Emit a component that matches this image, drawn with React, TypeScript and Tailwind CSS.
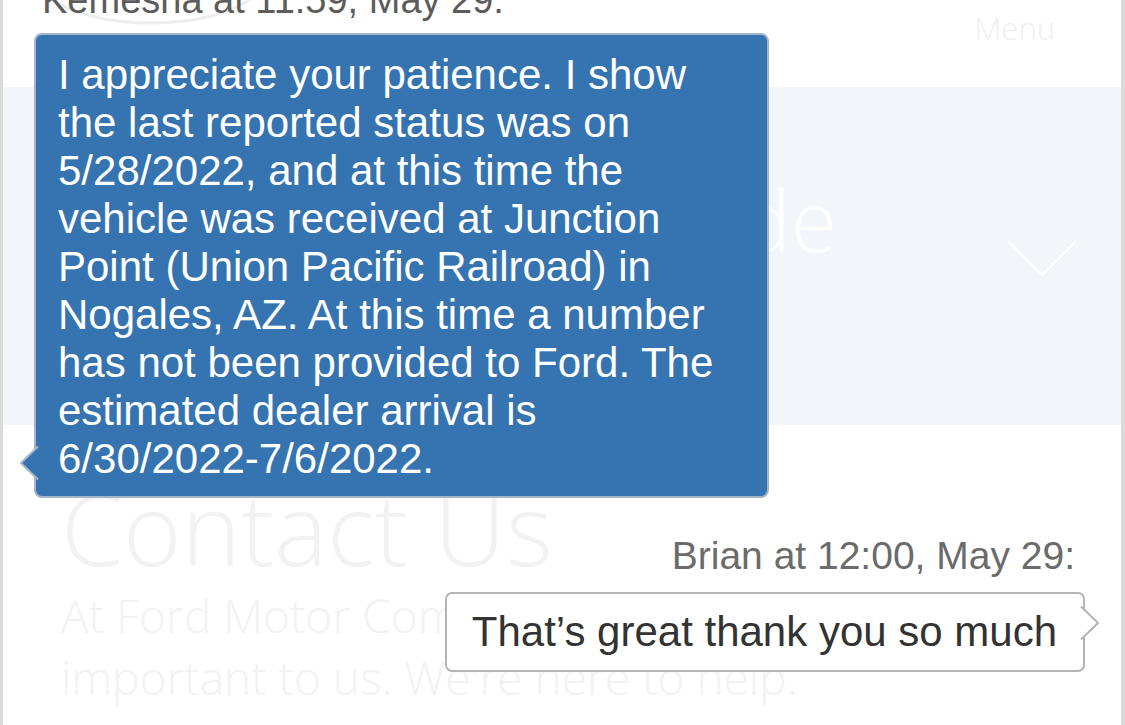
import React from "react";

const agentLines = [
  "I appreciate your patience. I show",
  "the last reported status was on",
  "5/28/2022, and at this time the",
  "vehicle was received at Junction",
  "Point (Union Pacific Railroad) in",
  "Nogales, AZ. At this time a number",
  "has not been provided to Ford. The",
  "estimated dealer arrival is",
  "6/30/2022-7/6/2022.",
];

function FadedPage() {
  return (
    <div className="flex h-full w-full">
      <div className="w-[3px] shrink-0 bg-[#dadada]" />
      <div className="flex min-w-0 flex-1 flex-col bg-white font-['Open_Sans',sans-serif]">
        {/* header */}
        <div className="relative flex h-[87px] items-start justify-end pr-[66px] pt-[5px]">
          <svg className="absolute left-[28px] top-[-70px]" width="240" height="98" viewBox="0 0 240 98">
            <ellipse cx="120" cy="45" rx="115" ry="48" fill="none" stroke="#ededed" strokeWidth="3" />
          </svg>
          <span className="text-[31px] font-light text-[#efefef]">Menu</span>
        </div>

        {/* hero band */}
        <div className="flex h-[338px] items-start justify-between bg-[#f2f6fa] pl-[47px] pr-[44px]">
          <div className="pt-[84px] text-[84px] font-light leading-[98px] text-white">
            <div>Emergency Roadside</div>
            <div>Assistance</div>
          </div>
          <svg className="mt-[153px]" width="70" height="38" viewBox="0 0 70 38">
            <path d="M2 2 L35 35 L68 2" fill="none" stroke="#ffffff" strokeWidth="2.5" />
          </svg>
        </div>

        {/* contact */}
        <div className="pl-[58px] pt-[52px] text-[#f2f2f2]">
          <div className="text-[100px] font-light leading-none">Contact Us</div>
          <p className="mt-[7px] text-[46px] font-light leading-[62px]">
            At Ford Motor Company, your satisfaction is
            <br />
            important to us. We're here to help.
          </p>
        </div>
      </div>
      <div className="w-[4px] shrink-0 bg-[#dadada]" />
    </div>
  );
}

function Chat() {
  return (
    <div className="absolute inset-0 flex flex-col font-['Liberation_Sans',Arial,sans-serif]">
      <div className="ml-[42px] mt-[-19px] whitespace-nowrap text-[38px] leading-none text-[#5c5c5c]">
        Kemesha at 11:59, May 29:
      </div>

      {/* agent bubble */}
      <div className="relative ml-[34px] mt-[14px] w-[735px] rounded-[8px] border-2 border-[#a3b5c6] bg-[#3574b0] px-[22px] pb-[13px] pt-[16px] text-[42px] leading-[48px] text-white">
        {agentLines.map((line) => (
          <div key={line} className="whitespace-nowrap">
            {line}
          </div>
        ))}
        <svg className="absolute left-[-17px] top-[411px]" width="20" height="34" viewBox="0 0 20 34">
          <path d="M20 0 L2 17 L20 34 Z" fill="#3574b0" />
          <path d="M19 0.5 L2 17 L19 33.5" fill="none" stroke="#a3b5c6" strokeWidth="2" strokeLinejoin="round" />
        </svg>
      </div>

      <div className="mr-[50px] mt-[38px] self-end whitespace-nowrap text-[39px] leading-none text-[#6b6b6b]">
        Brian at 12:00, May 29:
      </div>

      {/* customer bubble */}
      <div className="relative mr-[40px] mt-[17px] self-end rounded-[7px] border-2 border-[#b4b4b4] bg-white py-[14px] pl-[25px] pr-[26px] text-[42px] leading-[48px] text-[#333333]">
        <span className="whitespace-nowrap">That’s great thank you so much</span>
        <svg className="absolute right-[-17px] top-[12px]" width="20" height="34" viewBox="0 0 20 34">
          <path d="M0 0 L18 17 L0 34 Z" fill="#ffffff" />
          <path d="M1 0.5 L18 17 L1 33.5" fill="none" stroke="#b4b4b4" strokeWidth="2" strokeLinejoin="round" />
        </svg>
      </div>
    </div>
  );
}

export default function App() {
  return (
    <div className="relative h-[725px] w-[1125px] overflow-hidden bg-white">
      <FadedPage />
      <Chat />
    </div>
  );
}
